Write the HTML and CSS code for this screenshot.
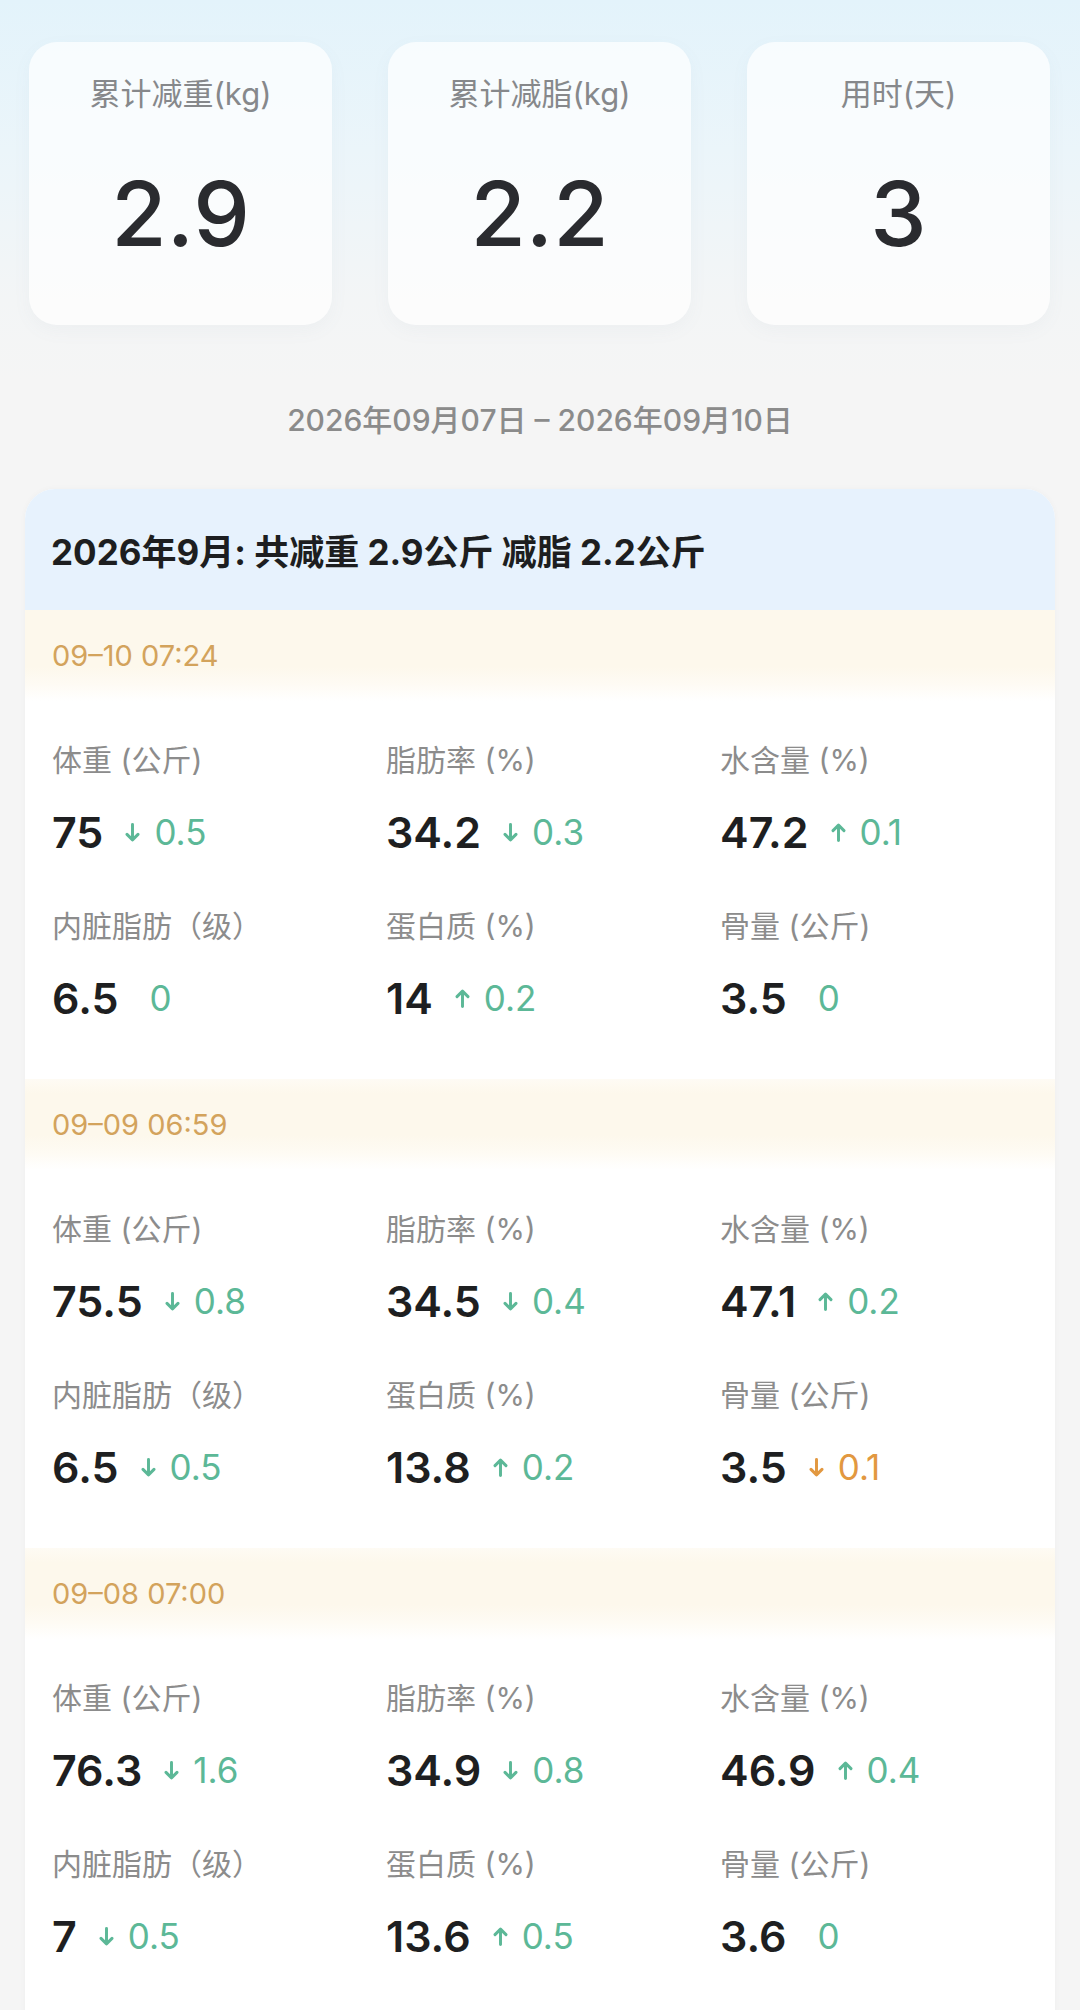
FILE: index.html
```html
<!DOCTYPE html>
<html lang="zh-CN">
<head>
<meta charset="utf-8">
<title>体重记录</title>
<link rel="stylesheet" href="styles.css">
</head>
<body>
<div class="page">
  <div class="stats">
    <div class="stat-card">
      <div class="stat-label">累计减重(kg)</div>
      <div class="stat-value">2.9</div>
    </div>
    <div class="stat-card">
      <div class="stat-label">累计减脂(kg)</div>
      <div class="stat-value">2.2</div>
    </div>
    <div class="stat-card">
      <div class="stat-label">用时(天)</div>
      <div class="stat-value">3</div>
    </div>
  </div>

  <div class="range">2026年09月07日 – 2026年09月10日</div>

  <div class="month-card">
    <div class="month-head">2026年9月: 共减重 2.9公斤 减脂 2.2公斤</div>

    <section class="record">
      <div class="record-time">09–10 07:24</div>
      <div class="metrics">
        <div class="metric"><div class="m-label">体重 (公斤)</div><div class="m-row"><span class="m-value">75</span><span class="delta good"><svg class="arrow" viewBox="0 0 14 18"><path d="M7 1.5V16M1.8 10.8L7 16l5.2-5.2"/></svg>0.5</span></div></div>
        <div class="metric"><div class="m-label">脂肪率 (%)</div><div class="m-row"><span class="m-value">34.2</span><span class="delta good"><svg class="arrow" viewBox="0 0 14 18"><path d="M7 1.5V16M1.8 10.8L7 16l5.2-5.2"/></svg>0.3</span></div></div>
        <div class="metric"><div class="m-label">水含量 (%)</div><div class="m-row"><span class="m-value">47.2</span><span class="delta good"><svg class="arrow" viewBox="0 0 14 18"><path d="M7 16.5V2M1.8 7.2L7 2l5.2 5.2"/></svg>0.1</span></div></div>
        <div class="metric"><div class="m-label">内脏脂肪（级）</div><div class="m-row"><span class="m-value">6.5</span><span class="delta good zero">0</span></div></div>
        <div class="metric"><div class="m-label">蛋白质 (%)</div><div class="m-row"><span class="m-value">14</span><span class="delta good"><svg class="arrow" viewBox="0 0 14 18"><path d="M7 16.5V2M1.8 7.2L7 2l5.2 5.2"/></svg>0.2</span></div></div>
        <div class="metric"><div class="m-label">骨量 (公斤)</div><div class="m-row"><span class="m-value">3.5</span><span class="delta good zero">0</span></div></div>
      </div>
    </section>

    <section class="record">
      <div class="record-time">09–09 06:59</div>
      <div class="metrics">
        <div class="metric"><div class="m-label">体重 (公斤)</div><div class="m-row"><span class="m-value">75.5</span><span class="delta good"><svg class="arrow" viewBox="0 0 14 18"><path d="M7 1.5V16M1.8 10.8L7 16l5.2-5.2"/></svg>0.8</span></div></div>
        <div class="metric"><div class="m-label">脂肪率 (%)</div><div class="m-row"><span class="m-value">34.5</span><span class="delta good"><svg class="arrow" viewBox="0 0 14 18"><path d="M7 1.5V16M1.8 10.8L7 16l5.2-5.2"/></svg>0.4</span></div></div>
        <div class="metric"><div class="m-label">水含量 (%)</div><div class="m-row"><span class="m-value">47.1</span><span class="delta good"><svg class="arrow" viewBox="0 0 14 18"><path d="M7 16.5V2M1.8 7.2L7 2l5.2 5.2"/></svg>0.2</span></div></div>
        <div class="metric"><div class="m-label">内脏脂肪（级）</div><div class="m-row"><span class="m-value">6.5</span><span class="delta good"><svg class="arrow" viewBox="0 0 14 18"><path d="M7 1.5V16M1.8 10.8L7 16l5.2-5.2"/></svg>0.5</span></div></div>
        <div class="metric"><div class="m-label">蛋白质 (%)</div><div class="m-row"><span class="m-value">13.8</span><span class="delta good"><svg class="arrow" viewBox="0 0 14 18"><path d="M7 16.5V2M1.8 7.2L7 2l5.2 5.2"/></svg>0.2</span></div></div>
        <div class="metric"><div class="m-label">骨量 (公斤)</div><div class="m-row"><span class="m-value">3.5</span><span class="delta bad"><svg class="arrow" viewBox="0 0 14 18"><path d="M7 1.5V16M1.8 10.8L7 16l5.2-5.2"/></svg>0.1</span></div></div>
      </div>
    </section>

    <section class="record">
      <div class="record-time">09–08 07:00</div>
      <div class="metrics">
        <div class="metric"><div class="m-label">体重 (公斤)</div><div class="m-row"><span class="m-value">76.3</span><span class="delta good"><svg class="arrow" viewBox="0 0 14 18"><path d="M7 1.5V16M1.8 10.8L7 16l5.2-5.2"/></svg>1.6</span></div></div>
        <div class="metric"><div class="m-label">脂肪率 (%)</div><div class="m-row"><span class="m-value">34.9</span><span class="delta good"><svg class="arrow" viewBox="0 0 14 18"><path d="M7 1.5V16M1.8 10.8L7 16l5.2-5.2"/></svg>0.8</span></div></div>
        <div class="metric"><div class="m-label">水含量 (%)</div><div class="m-row"><span class="m-value">46.9</span><span class="delta good"><svg class="arrow" viewBox="0 0 14 18"><path d="M7 16.5V2M1.8 7.2L7 2l5.2 5.2"/></svg>0.4</span></div></div>
        <div class="metric"><div class="m-label">内脏脂肪（级）</div><div class="m-row"><span class="m-value">7</span><span class="delta good"><svg class="arrow" viewBox="0 0 14 18"><path d="M7 1.5V16M1.8 10.8L7 16l5.2-5.2"/></svg>0.5</span></div></div>
        <div class="metric"><div class="m-label">蛋白质 (%)</div><div class="m-row"><span class="m-value">13.6</span><span class="delta good"><svg class="arrow" viewBox="0 0 14 18"><path d="M7 16.5V2M1.8 7.2L7 2l5.2 5.2"/></svg>0.5</span></div></div>
        <div class="metric"><div class="m-label">骨量 (公斤)</div><div class="m-row"><span class="m-value">3.6</span><span class="delta good zero">0</span></div></div>
      </div>
    </section>
  </div>
</div>
</body>
</html>
```

FILE: styles.css
```css
* { box-sizing: border-box; }

html, body {
  margin: 0;
  padding: 0;
}

body {
  width: 1080px;
  min-height: 2010px;
  overflow: hidden;
  background: linear-gradient(180deg, #e3f3fb 0px, #ebf5fa 150px, #f3f5f6 300px, #f5f5f5 380px, #f5f5f5 100%);
  font-family: Inter, "Noto Sans CJK SC", sans-serif;
  color: #222;
}

.page {
  padding-top: 42px;
}

.stats {
  display: grid;
  grid-template-columns: repeat(3, 1fr);
  gap: 56px;
  padding: 0 30px 0 29px;
}

.stat-card {
  height: 283px;
  border-radius: 28px;
  background: rgba(255, 255, 255, 0.7);
  box-shadow: 0 6px 18px rgba(120, 140, 160, 0.05);
  display: flex;
  flex-direction: column;
  align-items: center;
  padding-top: 32px;
}

.stat-label {
  font-size: 31px;
  line-height: 40px;
  color: #86888b;
}

.stat-value {
  margin-top: 50px;
  font-size: 90px;
  line-height: 100px;
  font-weight: 500;
  color: #2a2b2f;
}

.range {
  margin-top: 75px;
  text-align: center;
  font-size: 30px;
  line-height: 40px;
  font-weight: 500;
  color: #8b8b8b;
}

.month-card {
  margin: 49px 25px 0;
  background: #fff;
  border-radius: 30px 30px 0 0;
  overflow: hidden;
  box-shadow: 0 0 6px rgba(0, 0, 0, 0.03);
}

.month-head {
  height: 121px;
  background: #e7f2fd;
  display: flex;
  align-items: center;
  padding-left: 26px;
  font-size: 35px;
  font-weight: 700;
  color: #1d1e20;
}

.record {
  padding-bottom: 53px;
}

.record-time {
  height: 91px;
  display: flex;
  align-items: center;
  padding-left: 27px;
  font-size: 29px;
  color: #d3a35c;
  background: linear-gradient(180deg, #fdf8ec 0%, #fdf8ec 62%, #fefbf4 82%, #ffffff 100%);
}

.record + .record .record-time {
  background: linear-gradient(180deg, #fefbf4 0%, #fdf8ec 16%, #fdf8ec 62%, #fefbf4 82%, #ffffff 100%);
}

.metrics {
  display: grid;
  grid-template-columns: repeat(3, 334px);
  row-gap: 46px;
  padding: 39px 0 0 27px;
}

.m-label {
  font-size: 30px;
  line-height: 40px;
  color: #8c8c8c;
}

.m-row {
  margin-top: 24px;
  height: 56px;
  display: flex;
  align-items: center;
}

.m-value {
  font-size: 43px;
  font-weight: 600;
  color: #1e1f21;
  line-height: 56px;
}

.delta {
  display: flex;
  align-items: center;
  margin-left: 22px;
  font-size: 35px;
  font-weight: 400;
  line-height: 56px;
}

.delta.zero {
  margin-left: 31px;
}

.good { color: #5cb897; }
.bad { color: #e29840; }

.arrow {
  width: 15px;
  height: 19px;
  margin-right: 14px;
  fill: none;
  stroke: currentColor;
  stroke-width: 2.8;
  stroke-linecap: round;
  stroke-linejoin: round;
}
```
